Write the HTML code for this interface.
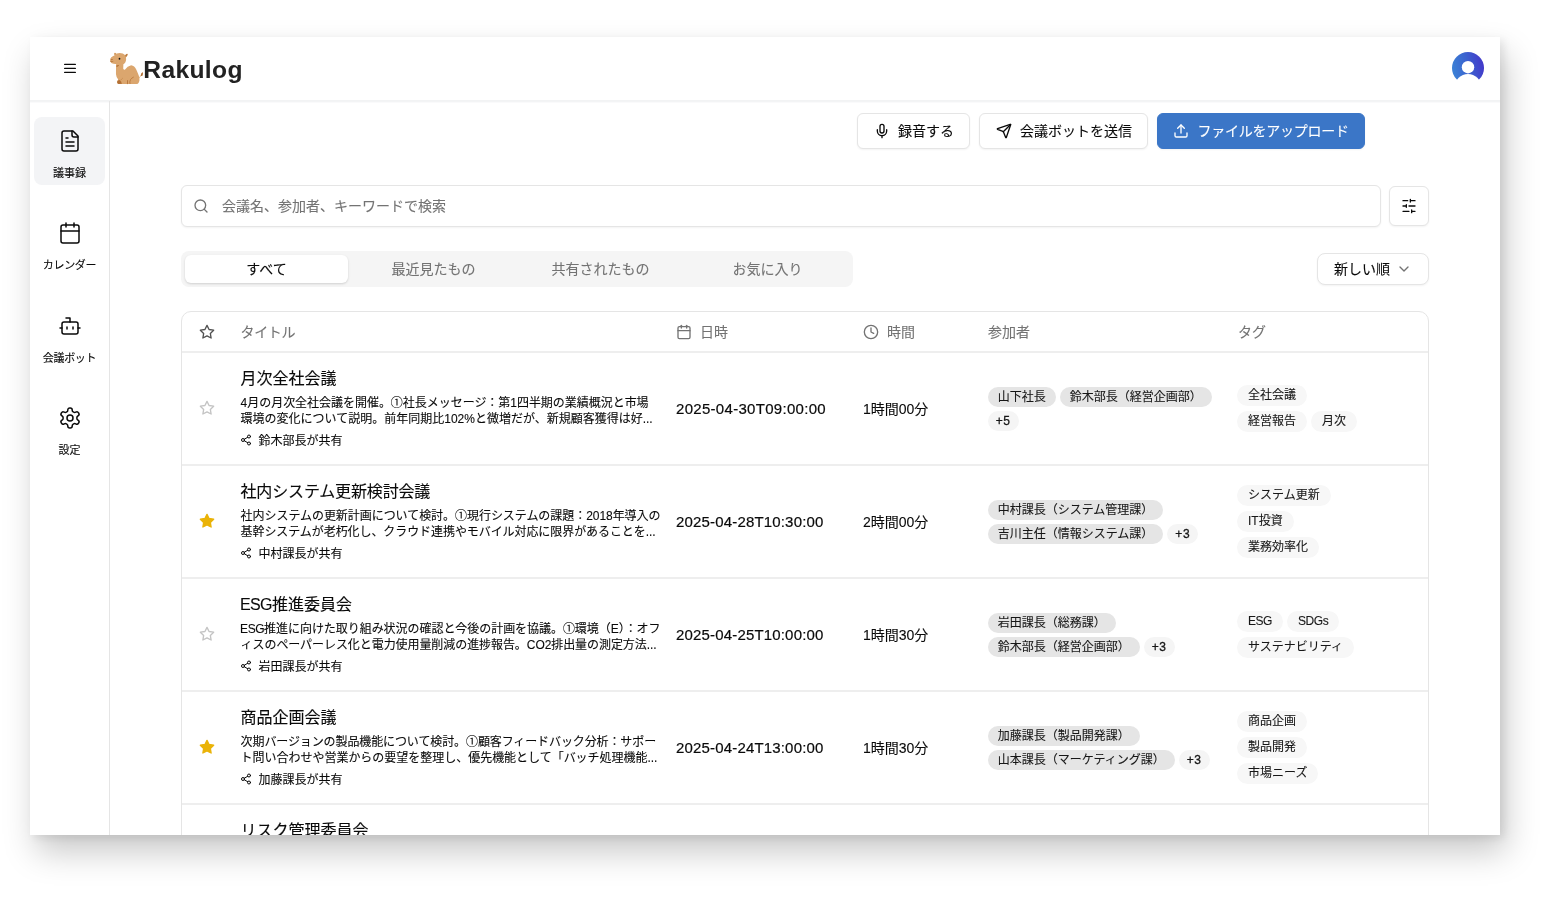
<!DOCTYPE html>
<html lang="ja">
<head>
<meta charset="utf-8">
<title>Rakulog</title>
<style>
*{box-sizing:border-box;margin:0;padding:0}
html,body{width:1542px;height:904px;overflow:hidden;background:#fff}
body{font-family:"Liberation Sans","Noto Sans CJK JP",sans-serif;color:#0a0a0a;-webkit-font-smoothing:antialiased;-webkit-text-stroke-width:.1px}
svg{display:block;flex:none}
.ic{fill:none;stroke:currentColor;stroke-width:2;stroke-linecap:round;stroke-linejoin:round}
.win{position:absolute;left:30px;top:37px;width:1470px;height:798px;background:#fff;overflow:hidden;will-change:transform}
.shadow{position:absolute;left:30px;top:37px;width:1470px;height:798px;
 box-shadow:4px 3px 8px rgba(0,0,0,.08),6px 17px 31px rgba(0,0,0,.215)}
/* header */
.hdr{position:absolute;left:0;top:0;width:1470px;height:64px;border-bottom:1px solid #f2f3f4;background:#fff;box-shadow:0 1px 0 #f3f4f5,0 2px 0 #fafafb;z-index:2}
.menu{position:absolute;left:32px;top:23px;width:16px;height:16px;color:#0a0a0a}
.logo{position:absolute;left:74px;top:9px;width:48px;height:44px}
.brand{position:absolute;left:113.3px;top:15px;height:36px;line-height:36px;font-size:24.6px;font-weight:700;color:#222;letter-spacing:.35px;-webkit-text-stroke-width:0;white-space:nowrap}
.avatar{position:absolute;left:1422px;top:15px;width:32px;height:32px;overflow:visible}
/* sidebar */
.side{position:absolute;left:0;top:64px;width:80px;height:734px;border-right:1px solid #e5e5e5;background:#fff;z-index:3;background:transparent}
.nav{position:absolute;left:4px;width:71px;height:68px;border-radius:8px;color:#0a0a0a}
.nav.on{background:#f3f4f6}
.nav svg{position:absolute;left:23.5px;top:12px;width:24px;height:24px}
.nav svg .ic{stroke-width:1.5}
.nav span{position:absolute;left:-10px;right:-10px;top:48px;height:16px;line-height:16px;font-size:11px;text-align:center;white-space:nowrap}
/* main */
.btn{position:absolute;top:76px;height:36px;border:1px solid #e5e5e5;border-radius:6px;background:#fff;font-size:14px;line-height:34px;white-space:nowrap;box-shadow:0 1px 2px rgba(0,0,0,.05)}
.btn svg{position:absolute;left:16px;top:9px;width:16px;height:16px}
.btn span{position:absolute;left:40px;top:0}
.btn.pri{background:#3b76c7;border-color:#3b76c7;color:#fff}
.btn.pri svg{left:15px}
.btn.pri span{left:39.5px;letter-spacing:-.25px}
.search{position:absolute;left:151px;top:148px;width:1200px;height:42px;border:1px solid #e5e5e5;border-radius:6px;background:#fff;box-shadow:0 1px 2px rgba(0,0,0,.05)}
.search svg{position:absolute;left:11px;top:12px;width:16px;height:16px;color:#737373}
.search span{position:absolute;left:40px;top:0;line-height:40px;font-size:14px;color:#737373;white-space:nowrap}
.filter{position:absolute;left:1359px;top:149px;width:40px;height:40px;border:1px solid #e5e5e5;border-radius:6px;background:#fff;box-shadow:0 1px 2px rgba(0,0,0,.05)}
.filter svg{position:absolute;left:11px;top:11px;width:16px;height:16px}
.tabs{position:absolute;left:151px;top:214px;width:672px;height:36px;border-radius:8px;background:#f5f5f5;padding:4px;display:flex;gap:4px}
.tab{width:163px;height:28px;border-radius:6px;line-height:28px;text-align:center;font-size:14px;color:#737373;white-space:nowrap}
.tab.on{background:#fff;color:#0a0a0a;box-shadow:0 1px 3px rgba(0,0,0,.1),0 1px 2px rgba(0,0,0,.06)}
.sort{position:absolute;left:1287px;top:216px;width:112px;height:32px;border:1px solid #e5e5e5;border-radius:8px;background:#fff;box-shadow:0 1px 2px rgba(0,0,0,.05)}
.sort span{position:absolute;left:16px;top:0;line-height:30px;font-size:14px;white-space:nowrap}
.sort svg{position:absolute;left:78px;top:7px;width:16px;height:16px;color:#737373}
/* table */
.tbl{position:absolute;left:151px;top:274px;width:1248px;height:600px;border:1px solid #e5e5e5;border-radius:10px;background:#fff;overflow:hidden}
.th{position:absolute;left:0;top:0;width:1246px;height:41px;border-bottom:2px solid #eee;color:#737373;font-size:14px;line-height:40px}
.th>div{position:absolute;top:0;height:40px;display:flex;align-items:center;gap:8px;white-space:nowrap}
.th svg{width:16px;height:16px}
.row{position:absolute;left:0;width:1246px;height:113px;border-bottom:2px solid #eee}
.star{position:absolute;left:17px;top:47px;width:16px;height:16px;color:#c4c4c4}
.star.on{color:#eab308}
.star.on .ic{fill:#eab308}
.ttl{position:absolute;left:58.5px;top:14.3px;height:24px;line-height:24px;font-size:16px;font-weight:400;-webkit-text-stroke-width:.12px;white-space:nowrap}
.desc{position:absolute;left:58.6px;top:41.8px;width:424px;line-height:16px;font-size:12px;white-space:nowrap}
.shr{position:absolute;left:58px;top:79.5px;height:16px;line-height:16px;font-size:12px;white-space:nowrap;display:flex;align-items:center;gap:6.5px}
.shr svg{width:12px;height:12px;margin-top:-1px}
.la{letter-spacing:-.6px}
.lb{letter-spacing:-.45px}
.dt{position:absolute;left:494px;top:45.6px;height:20px;line-height:20px;font-size:15px;letter-spacing:.3px;-webkit-text-stroke-width:.2px;white-space:nowrap}
.du{position:absolute;left:681px;top:46px;height:20px;line-height:20px;font-size:14px;white-space:nowrap}
.ppl{position:absolute;left:805.7px;top:-.4px;width:236px;height:112px;display:flex;flex-wrap:wrap;align-content:center;gap:4px}
.tags{position:absolute;left:1055px;top:-.4px;width:128px;height:112px;display:flex;flex-wrap:wrap;align-content:center;gap:4.5px 4px}
.b{height:20px;line-height:20px;padding:0 10px;border-radius:10px;background:#e5e5e5;font-size:12px;white-space:nowrap;color:#171717}
.b.m{background:#f5f5f5;padding:0 8px;letter-spacing:.6px;-webkit-text-stroke:.3px #171717}
.t{height:21.5px;line-height:21.5px;padding:0 11px;border-radius:11px;background:#f7f7f7;font-size:12px;white-space:nowrap;color:#171717}
</style>
</head>
<body>
<div class="shadow"></div>
<div class="win">
  <div class="hdr">
    <svg class="menu" viewBox="0 0 24 24"><g class="ic"><path d="M4 6.6h16M4 12.6h16M4 18.6h16"/></g></svg>
    <svg class="logo" viewBox="0 0 986 904"><g>
<path d="M722 652 Q756 628 770 588" fill="none" stroke="#dba66e" stroke-width="16" stroke-linecap="round"/>
<path d="M756 604 Q752 562 796 532 Q812 574 786 614 Q768 624 756 604Z" fill="#b27035"/>
<path d="M218 188 Q196 150 222 140 Q246 138 252 160 L262 152 Q320 132 385 152 L410 172 L436 190 Q452 150 482 160 Q500 175 470 215 L452 232 Q462 290 440 335 Q420 362 398 375 L395 465 Q405 492 428 488 Q480 415 558 395 Q628 402 660 478 Q690 545 712 602 Q736 660 728 715 Q716 768 686 780 L300 782 Q262 770 268 735 Q278 700 292 690 Q250 640 246 580 L246 405 L250 368 Q200 372 160 352 Q120 330 124 295 Q128 250 150 232 Q180 205 218 188Z" fill="#dba66e"/>
<path d="M434 198 Q450 162 480 166 Q488 180 464 212 Q448 226 434 198Z" fill="#b27035" opacity=".85"/>
<path d="M214 180 Q206 158 224 150 Q240 152 240 172Z" fill="#c48a50"/>
<ellipse cx="318" cy="263" rx="18" ry="22" fill="#121212"/>
<path d="M138 278 Q160 260 184 272 Q174 292 150 294Z" fill="#b27035"/>
<path d="M126 310 Q160 322 198 304 Q192 332 150 334 Q130 330 126 310Z" fill="#b27035"/>
<path d="M250 408 Q280 384 310 390 Q302 422 262 430Z" fill="#b27035"/>
<path d="M270 735 Q285 698 320 698 Q352 720 370 778 L300 782 Q266 772 270 735Z" fill="#b27035"/>
<path d="M345 700 Q362 675 382 662" fill="none" stroke="#bd8045" stroke-width="11" stroke-linecap="round"/>
<path d="M482 775 L484 710" fill="none" stroke="#b27035" stroke-width="17" stroke-linecap="round"/>
<path d="M532 772 Q520 740 545 690 Q570 655 604 640" fill="none" stroke="#b27035" stroke-width="15" stroke-linecap="round"/>
</g></svg>
    <div class="brand">Rakulog</div>
    <svg class="avatar" viewBox="0 0 32 32"><defs><linearGradient id="ag" x1="0" y1="0.6" x2="1" y2="0.4"><stop offset="0" stop-color="#3b82d6"/><stop offset=".5" stop-color="#3b62cf"/><stop offset="1" stop-color="#4338ca"/></linearGradient><clipPath id="ac"><circle cx="16" cy="16" r="16"/></clipPath></defs>
<circle cx="16" cy="16" r="16" fill="url(#ag)"/>
<ellipse cx="16" cy="35" rx="13.2" ry="13" fill="#fff"/>
<circle cx="16" cy="15.2" r="6.2" fill="#fff"/></svg>
  </div>
  <div class="side">
    <div class="nav on" style="top:16px"><svg viewBox="0 0 24 24"><g class="ic"><path d="M15 2H6a2 2 0 0 0-2 2v16a2 2 0 0 0 2 2h12a2 2 0 0 0 2-2V7Z"/><path d="M14 2v4a2 2 0 0 0 2 2h4"/><path d="M10 9H8"/><path d="M16 13H8"/><path d="M16 17H8"/></g></svg><span>議事録</span></div>
    <div class="nav" style="top:108.33px"><svg viewBox="0 0 24 24"><g class="ic"><path d="M8 2v4"/><path d="M16 2v4"/><rect width="18" height="18" x="3" y="4" rx="2"/><path d="M3 10h18"/></g></svg><span style="letter-spacing:-.3px">カレンダー</span></div>
    <div class="nav" style="top:200.66px"><svg viewBox="0 0 24 24"><g class="ic"><path d="M12 8V4H8"/><rect width="16" height="12" x="4" y="8" rx="2"/><path d="M2 14h2"/><path d="M20 14h2"/><path d="M15 13v2"/><path d="M9 13v2"/></g></svg><span style="letter-spacing:-.3px">会議ボット</span></div>
    <div class="nav" style="top:293.4px"><svg viewBox="0 0 24 24"><g class="ic"><path d="M12.22 2h-.44a2 2 0 0 0-2 2v.18a2 2 0 0 1-1 1.73l-.43.25a2 2 0 0 1-2 0l-.15-.08a2 2 0 0 0-2.73.73l-.22.38a2 2 0 0 0 .73 2.73l.15.1a2 2 0 0 1 1 1.72v.51a2 2 0 0 1-1 1.74l-.15.09a2 2 0 0 0-.73 2.73l.22.38a2 2 0 0 0 2.73.73l.15-.08a2 2 0 0 1 2 0l.43.25a2 2 0 0 1 1 1.73V20a2 2 0 0 0 2 2h.44a2 2 0 0 0 2-2v-.18a2 2 0 0 1 1-1.73l.43-.25a2 2 0 0 1 2 0l.15.08a2 2 0 0 0 2.73-.73l.22-.39a2 2 0 0 0-.73-2.73l-.15-.08a2 2 0 0 1-1-1.74v-.5a2 2 0 0 1 1-1.74l.15-.09a2 2 0 0 0 .73-2.73l-.22-.38a2 2 0 0 0-2.73-.73l-.15.08a2 2 0 0 1-2 0l-.43-.25a2 2 0 0 1-1-1.73V4a2 2 0 0 0-2-2z"/><circle cx="12" cy="12" r="3"/></g></svg><span>設定</span></div>
  </div>

  <div class="btn" style="left:827px;width:113px"><svg viewBox="0 0 24 24"><g class="ic"><path d="M12 2a3 3 0 0 0-3 3v7a3 3 0 0 0 6 0V5a3 3 0 0 0-3-3Z"/><path d="M19 10v2a7 7 0 0 1-14 0v-2"/><path d="M12 19v3"/></g></svg><span>録音する</span></div>
  <div class="btn" style="left:949px;width:169px"><svg viewBox="0 0 24 24"><g class="ic"><path d="M14.536 21.686a.5.5 0 0 0 .937-.024l6.5-19a.496.496 0 0 0-.635-.635l-19 6.5a.5.5 0 0 0-.024.937l7.93 3.18a2 2 0 0 1 1.112 1.11z"/><path d="m21.854 2.147-10.94 10.939"/></g></svg><span>会議ボットを送信</span></div>
  <div class="btn pri" style="left:1127px;width:208px"><svg viewBox="0 0 24 24"><g class="ic"><path d="M21 15v4a2 2 0 0 1-2 2H5a2 2 0 0 1-2-2v-4"/><path d="m17 8-5-5-5 5"/><path d="M12 3v12"/></g></svg><span>ファイルをアップロード</span></div>

  <div class="search"><svg viewBox="0 0 24 24"><g class="ic"><circle cx="11" cy="11" r="8"/><path d="m21 21-4.3-4.3"/></g></svg><span>会議名、参加者、キーワードで検索</span></div>
  <div class="filter"><svg viewBox="0 0 24 24"><g class="ic"><path d="M21 4h-7M10 4H3M21 12h-9M8 12H3M21 20h-5M12 20H3M14 2v4M8 10v4M16 18v4"/></g></svg></div>

  <div class="tabs"><div class="tab on">すべて</div><div class="tab">最近見たもの</div><div class="tab">共有されたもの</div><div class="tab">お気に入り</div></div>
  <div class="sort"><span>新しい順</span><svg viewBox="0 0 24 24"><g class="ic"><path d="m6 9 6 6 6-6"/></g></svg></div>

  <div class="tbl">
    <div class="th">
      <div style="left:17px;color:#525252"><svg viewBox="0 0 24 24"><g class="ic"><path d="M12 2l3.09 6.26L22 9.27l-5 4.87 1.18 6.88L12 17.77l-6.18 3.25L7 14.14 2 9.27l6.91-1.01z"/></g></svg></div>
      <div style="left:58.5px;letter-spacing:-.35px">タイトル</div>
      <div style="left:494px"><svg viewBox="0 0 24 24"><g class="ic"><path d="M8 2v4"/><path d="M16 2v4"/><rect width="18" height="18" x="3" y="4" rx="2"/><path d="M3 10h18"/></g></svg>日時</div>
      <div style="left:681px"><svg viewBox="0 0 24 24"><g class="ic"><circle cx="12" cy="12" r="10"/><path d="M12 6v6l4 2"/></g></svg>時間</div>
      <div style="left:806px">参加者</div>
      <div style="left:1056px">タグ</div>
    </div>

    <div class="row" style="top:41px">
      <svg class="star" viewBox="0 0 24 24"><g class="ic"><path d="M12 2l3.09 6.26L22 9.27l-5 4.87 1.18 6.88L12 17.77l-6.18 3.25L7 14.14 2 9.27l6.91-1.01z"/></g></svg>
      <div class="ttl">月次全社会議</div>
      <div class="desc"><span style="letter-spacing:-0.032px">4月の月次全社会議を開催。①社長メッセージ：第1四半期の業績概況と市場</span><br><span style="letter-spacing:0.0px">環境の変化について説明。前年同期比102%と微増だが、新規顧客獲得は好...</span></div>
      <div class="shr"><svg viewBox="0 0 24 24"><g class="ic"><circle cx="18" cy="5" r="3"/><circle cx="6" cy="12" r="3"/><circle cx="18" cy="19" r="3"/><path d="M8.59 13.51l6.83 3.98M15.41 6.51l-6.82 3.98"/></g></svg>鈴木部長が共有</div>
      <div class="dt">2025-04-30T09:00:00</div>
      <div class="du">1時間00分</div>
      <div class="ppl"><span class="b">山下社長</span><span class="b">鈴木部長（経営企画部）</span><span class="b m">+5</span></div>
      <div class="tags"><span class="t">全社会議</span><span class="t">経営報告</span><span class="t">月次</span></div>
    </div>

    <div class="row" style="top:154px">
      <svg class="star on" viewBox="0 0 24 24"><g class="ic"><path d="M12 2l3.09 6.26L22 9.27l-5 4.87 1.18 6.88L12 17.77l-6.18 3.25L7 14.14 2 9.27l6.91-1.01z"/></g></svg>
      <div class="ttl" style="letter-spacing:-.15px">社内システム更新検討会議</div>
      <div class="desc"><span style="letter-spacing:-0.047px">社内システムの更新計画について検討。①現行システムの課題：2018年導入の</span><br><span style="letter-spacing:-0.075px">基幹システムが老朽化し、クラウド連携やモバイル対応に限界があることを...</span></div>
      <div class="shr"><svg viewBox="0 0 24 24"><g class="ic"><circle cx="18" cy="5" r="3"/><circle cx="6" cy="12" r="3"/><circle cx="18" cy="19" r="3"/><path d="M8.59 13.51l6.83 3.98M15.41 6.51l-6.82 3.98"/></g></svg>中村課長が共有</div>
      <div class="dt" style="letter-spacing:.17px">2025-04-28T10:30:00</div>
      <div class="du">2時間00分</div>
      <div class="ppl"><span class="b">中村課長（システム管理課）</span><span class="b">吉川主任（情報システム課）</span><span class="b m">+3</span></div>
      <div class="tags"><span class="t">システム更新</span><span class="t">IT投資</span><span class="t">業務効率化</span></div>
    </div>

    <div class="row" style="top:267px">
      <svg class="star" viewBox="0 0 24 24"><g class="ic"><path d="M12 2l3.09 6.26L22 9.27l-5 4.87 1.18 6.88L12 17.77l-6.18 3.25L7 14.14 2 9.27l6.91-1.01z"/></g></svg>
      <div class="ttl"><span class="la" style="margin-left:-.6px">ESG</span>推進委員会</div>
      <div class="desc"><span style="letter-spacing:-0.047px"><span class="lb" style="margin-left:-.5px">ESG</span>推進に向けた取り組み状況の確認と今後の計画を協議。①環境（E）：オフ</span><br><span style="letter-spacing:-0.07px">ィスのペーパーレス化と電力使用量削減の進捗報告。CO2排出量の測定方法...</span></div>
      <div class="shr"><svg viewBox="0 0 24 24"><g class="ic"><circle cx="18" cy="5" r="3"/><circle cx="6" cy="12" r="3"/><circle cx="18" cy="19" r="3"/><path d="M8.59 13.51l6.83 3.98M15.41 6.51l-6.82 3.98"/></g></svg>岩田課長が共有</div>
      <div class="dt" style="letter-spacing:.17px">2025-04-25T10:00:00</div>
      <div class="du">1時間30分</div>
      <div class="ppl"><span class="b">岩田課長（総務課）</span><span class="b">鈴木部長（経営企画部）</span><span class="b m">+3</span></div>
      <div class="tags"><span class="t lb">ESG</span><span class="t lb">SDGs</span><span class="t">サステナビリティ</span></div>
    </div>

    <div class="row" style="top:380px">
      <svg class="star on" viewBox="0 0 24 24"><g class="ic"><path d="M12 2l3.09 6.26L22 9.27l-5 4.87 1.18 6.88L12 17.77l-6.18 3.25L7 14.14 2 9.27l6.91-1.01z"/></g></svg>
      <div class="ttl">商品企画会議</div>
      <div class="desc"><span style="letter-spacing:-0.106px">次期バージョンの製品機能について検討。①顧客フィードバック分析：サポー</span><br><span style="letter-spacing:-0.022px">ト問い合わせや営業からの要望を整理し、優先機能として「バッチ処理機能...</span></div>
      <div class="shr"><svg viewBox="0 0 24 24"><g class="ic"><circle cx="18" cy="5" r="3"/><circle cx="6" cy="12" r="3"/><circle cx="18" cy="19" r="3"/><path d="M8.59 13.51l6.83 3.98M15.41 6.51l-6.82 3.98"/></g></svg>加藤課長が共有</div>
      <div class="dt" style="letter-spacing:.17px">2025-04-24T13:00:00</div>
      <div class="du">1時間30分</div>
      <div class="ppl"><span class="b">加藤課長（製品開発課）</span><span class="b">山本課長（マーケティング課）</span><span class="b m">+3</span></div>
      <div class="tags"><span class="t">商品企画</span><span class="t">製品開発</span><span class="t">市場ニーズ</span></div>
    </div>

    <div class="row" style="top:493px">
      <div class="ttl">リスク管理委員会</div>
    </div>
  </div>
</div>
</body>
</html>
